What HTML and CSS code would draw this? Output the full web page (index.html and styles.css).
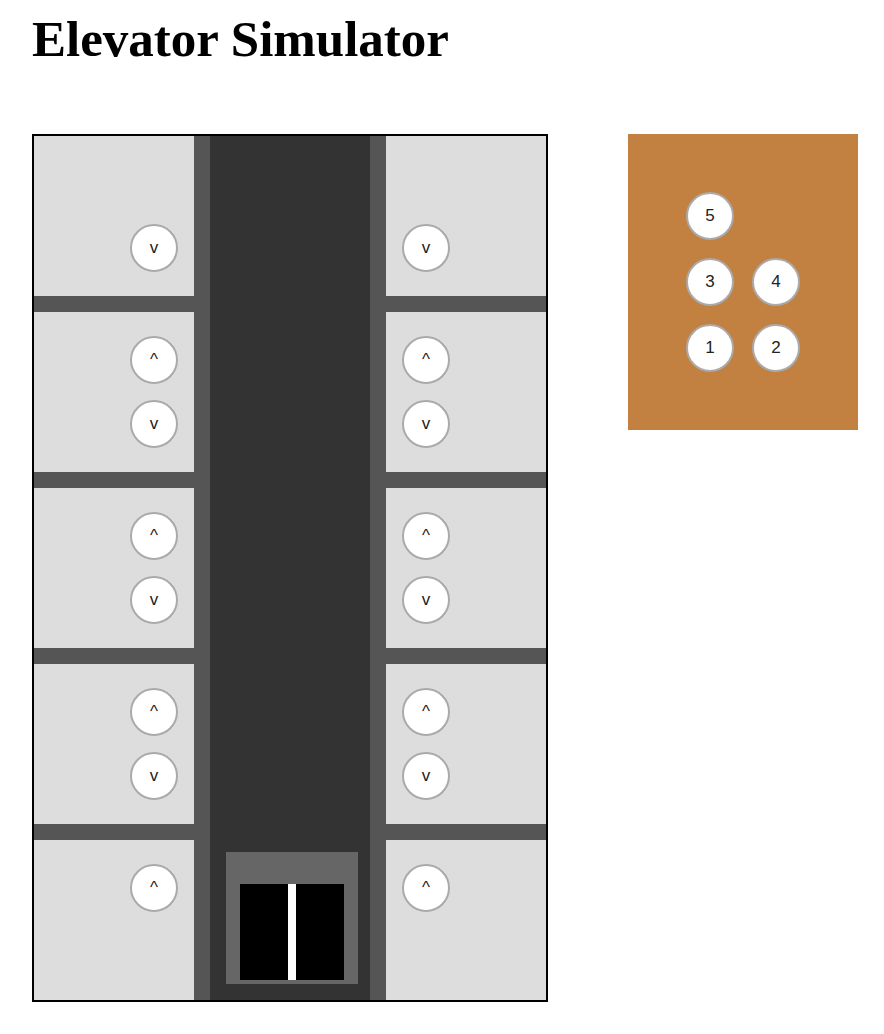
FILE: index.html
```html
<!DOCTYPE html>
<html lang="en">
<head>
    <meta charset="UTF-8">
    <meta name="viewport" content="width=device-width, initial-scale=1.0">
    <title>Elevator Simulator</title>
    <link rel="stylesheet" href="styles.css">
</head>
<body>
    <h1>Elevator Simulator</h1>

    <div class="sim">
        <div class="building">
            <!-- left hall calls -->
            <div class="floors">
                <div class="floor top">
                    <button class="call-btn">v</button>
                </div>
                <div class="floor">
                    <button class="call-btn">^</button>
                    <button class="call-btn">v</button>
                </div>
                <div class="floor">
                    <button class="call-btn">^</button>
                    <button class="call-btn">v</button>
                </div>
                <div class="floor">
                    <button class="call-btn">^</button>
                    <button class="call-btn">v</button>
                </div>
                <div class="floor">
                    <button class="call-btn">^</button>
                </div>
            </div>

            <div class="shaft">
                <div class="car">
                    <div class="doors">
                        <div class="door"></div>
                        <div class="door"></div>
                    </div>
                </div>
            </div>

            <!-- right hall calls -->
            <div class="floors right">
                <div class="floor top">
                    <button class="call-btn">v</button>
                </div>
                <div class="floor">
                    <button class="call-btn">^</button>
                    <button class="call-btn">v</button>
                </div>
                <div class="floor">
                    <button class="call-btn">^</button>
                    <button class="call-btn">v</button>
                </div>
                <div class="floor">
                    <button class="call-btn">^</button>
                    <button class="call-btn">v</button>
                </div>
                <div class="floor">
                    <button class="call-btn">^</button>
                </div>
            </div>
        </div>

        <div class="panel">
            <div class="panel-grid">
                <div class="panel-row">
                    <button class="call-btn">5</button>
                </div>
                <div class="panel-row">
                    <button class="call-btn">3</button>
                    <button class="call-btn">4</button>
                </div>
                <div class="panel-row">
                    <button class="call-btn">1</button>
                    <button class="call-btn">2</button>
                </div>
            </div>
        </div>
    </div>
</body>
</html>
```

FILE: styles.css
```css
:root {
    --floor-color: #dddddd;
    --wall-color: #555555;
    --shaft-color: #333333;
    --car-color: #666666;
    --panel-color: #c28141;
}

* {
    box-sizing: border-box;
}

body {
    margin: 0;
    padding: 0 26px 0 32px;
    font-family: "Liberation Serif", serif;
    background: white;
}

h1 {
    font-size: 51px;
    line-height: 57px;
    margin: 11px 0 66px;
}

.sim {
    display: flex;
    align-items: flex-start;
    gap: 80px;
}

.building {
    display: flex;
    flex-shrink: 0;
    border: 2px solid black;
}

.floors {
    display: flex;
    flex-direction: column;
    gap: 16px;
    width: 160px;
    background-color: var(--wall-color);
}

.floor {
    height: 160px;
    background-color: var(--floor-color);
    display: flex;
    flex-direction: column;
    align-items: flex-end;
    gap: 16px;
    padding: 24px 16px;
}

.floor.top {
    justify-content: flex-end;
}

.floors.right .floor {
    align-items: flex-start;
}

.shaft {
    width: 192px;
    border-left: 16px solid var(--wall-color);
    border-right: 16px solid var(--wall-color);
    background-color: var(--shaft-color);
    display: flex;
    flex-direction: column;
    justify-content: flex-end;
    padding: 16px 12px 16px 16px;
}

.car {
    width: 132px;
    height: 132px;
    background-color: var(--car-color);
    padding: 32px 14px 4px;
}

.doors {
    display: flex;
    gap: 8px;
    height: 100%;
    background: white;
}

.door {
    flex: 1;
    background: black;
}

.call-btn {
    width: 48px;
    height: 48px;
    padding: 0;
    border-radius: 50%;
    border: 2px solid #aaaaaa;
    background: white;
    color: #222222;
    font-family: "Liberation Sans", Arial, sans-serif;
    font-size: 17px;
    cursor: pointer;
}

.panel {
    flex-shrink: 0;
    width: 230px;
    height: 296px;
    background-color: var(--panel-color);
    display: flex;
    align-items: center;
    justify-content: center;
}

.panel-grid {
    display: flex;
    flex-direction: column;
    gap: 18px;
    width: 114px;
}

.panel-row {
    display: flex;
    gap: 18px;
}
```
